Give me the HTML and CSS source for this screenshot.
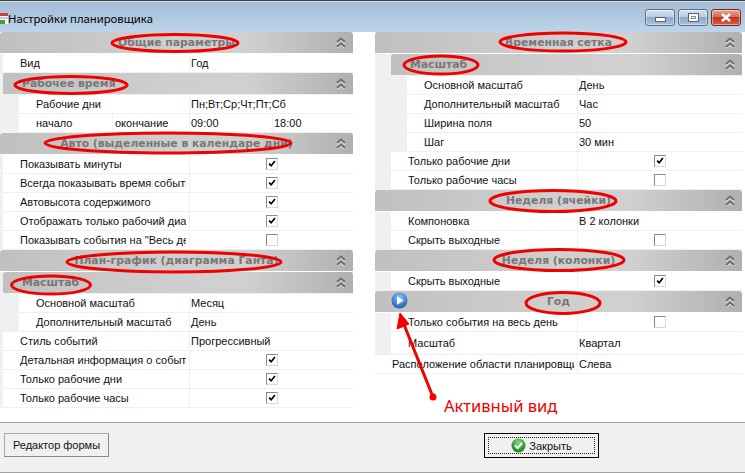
FILE: index.html
```html
<!DOCTYPE html>
<html lang="ru">
<head>
<meta charset="utf-8">
<title>Настройки планировщика</title>
<link rel="stylesheet" href="styles.css">
</head>
<body>
<svg class="defs" width="0" height="0" aria-hidden="true">
  <symbol id="chev" viewBox="0 0 10 11">
    <path d="M1 5.500 5 2l4 3.500M1 10.500 5 7l4 3.500" fill="none" stroke="#fff" stroke-width="1.600" transform="translate(0 .8)" opacity=".7"/>
    <path d="M1 5 5 1.500 9 5M1 10 5 6.500 9 10" fill="none" stroke="#6f6f6f" stroke-width="2"/>
  </symbol>
  <symbol id="tick" viewBox="0 0 12 12">
    <path d="M2.500 5.500 5 8l4.500-5.500" fill="none" stroke="#000" stroke-width="2"/>
  </symbol>
</svg>
<div class="window">
  <header class="titlebar">
    <svg class="appicon" width="8" height="11" viewBox="0 0 8 11"><rect x="0" y="0" width="8" height="11" fill="#fff"/><rect x="0" y="0" width="8" height="3" fill="#c8413a"/><rect x="0" y="7" width="5" height="4" fill="#3aa53a"/><path d="M0 5h8" stroke="#999"/></svg>
    <span class="title">Настройки планировщика</span>
    <div class="winbtns">
      <span class="winbtn"><i class="glyph-min"></i></span>
      <span class="winbtn"><i class="glyph-max"></i></span>
      <span class="winbtn close">
        <svg width="12" height="9" viewBox="0 0 12 9"><path d="M2 1l8 7M10 1 2 8" stroke="#fff" stroke-width="2.600"/></svg>
      </span>
    </div>
  </header>

  <main class="content">
    <section class="panel left">
      <div class="group">
        <div class="head">Общие параметры<svg class="chev"><use href="#chev"/></svg></div>
        <div class="body thin">
          <div class="row"><span class="label">Вид</span><span class="value">Год</span></div>
          <div class="group">
            <div class="head sub">Рабочее время<svg class="chev"><use href="#chev"/></svg></div>
            <div class="body">
              <div class="row"><span class="label">Рабочие дни</span><span class="value">Пн;Вт;Ср;Чт;Пт;Сб</span></div>
              <div class="row four"><span class="label">начало</span><span class="label plain">окончание</span><span class="value">09:00</span><span class="value">18:00</span></div>
            </div>
          </div>
        </div>
      </div>
      <div class="group">
        <div class="head">Авто (выделенные в календаре дни)<svg class="chev"><use href="#chev"/></svg></div>
        <div class="body thin">
          <div class="row"><span class="label">Показывать минуты</span><span class="value check"><span class="box"><svg><use href="#tick"/></svg></span></span></div>
          <div class="row"><span class="label">Всегда показывать время событий</span><span class="value check"><span class="box"><svg><use href="#tick"/></svg></span></span></div>
          <div class="row"><span class="label">Автовысота содержимого</span><span class="value check"><span class="box"><svg><use href="#tick"/></svg></span></span></div>
          <div class="row"><span class="label">Отображать только рабочий диапазон</span><span class="value check"><span class="box"><svg><use href="#tick"/></svg></span></span></div>
          <div class="row"><span class="label">Показывать события на "Весь день"</span><span class="value check"><span class="box"></span></span></div>
        </div>
      </div>
      <div class="group">
        <div class="head">План-график (диаграмма Ганта)<svg class="chev"><use href="#chev"/></svg></div>
        <div class="body thin">
          <div class="group">
            <div class="head sub">Масштаб<svg class="chev"><use href="#chev"/></svg></div>
            <div class="body">
              <div class="row"><span class="label">Основной масштаб</span><span class="value">Месяц</span></div>
              <div class="row"><span class="label">Дополнительный масштаб</span><span class="value">День</span></div>
            </div>
          </div>
          <div class="row"><span class="label">Стиль событий</span><span class="value">Прогрессивный</span></div>
          <div class="row"><span class="label">Детальная информация о событии</span><span class="value check"><span class="box"><svg><use href="#tick"/></svg></span></span></div>
          <div class="row"><span class="label">Только рабочие дни</span><span class="value check"><span class="box"><svg><use href="#tick"/></svg></span></span></div>
          <div class="row"><span class="label">Только рабочие часы</span><span class="value check"><span class="box"><svg><use href="#tick"/></svg></span></span></div>
        </div>
      </div>
    </section>

    <section class="panel right">
      <div class="group">
        <div class="head">Временная сетка<svg class="chev"><use href="#chev"/></svg></div>
        <div class="body">
          <div class="group">
            <div class="head sub">Масштаб<svg class="chev"><use href="#chev"/></svg></div>
            <div class="body">
              <div class="row"><span class="label">Основной масштаб</span><span class="value">День</span></div>
              <div class="row"><span class="label">Дополнительный масштаб</span><span class="value">Час</span></div>
              <div class="row"><span class="label">Ширина поля</span><span class="value">50</span></div>
              <div class="row"><span class="label">Шаг</span><span class="value">30 мин</span></div>
            </div>
          </div>
          <div class="row"><span class="label">Только рабочие дни</span><span class="value check"><span class="box"><svg><use href="#tick"/></svg></span></span></div>
          <div class="row"><span class="label">Только рабочие часы</span><span class="value check"><span class="box"></span></span></div>
        </div>
      </div>
      <div class="group">
        <div class="head">Неделя (ячейки)<svg class="chev"><use href="#chev"/></svg></div>
        <div class="body">
          <div class="row"><span class="label">Компоновка</span><span class="value">В 2 колонки</span></div>
          <div class="row"><span class="label">Скрыть выходные</span><span class="value check"><span class="box"></span></span></div>
        </div>
      </div>
      <div class="group">
        <div class="head">Неделя (колонки)<svg class="chev"><use href="#chev"/></svg></div>
        <div class="body">
          <div class="row"><span class="label">Скрыть выходные</span><span class="value check"><span class="box"><svg><use href="#tick"/></svg></span></span></div>
        </div>
      </div>
      <div class="group">
        <div class="head">
          <svg class="play" width="17" height="17" viewBox="0 0 17 17">
            <defs><radialGradient id="pg" cx=".5" cy=".3" r=".8"><stop offset="0" stop-color="#8fc1f0"/><stop offset=".6" stop-color="#3a7fd0"/><stop offset="1" stop-color="#1d4f9a"/></radialGradient></defs>
            <circle cx="8.500" cy="8.500" r="8" fill="url(#pg)"/>
            <path d="M6 4.200v8.600l6.600-4.300z" fill="#fff"/>
          </svg>
          Год<svg class="chev"><use href="#chev"/></svg>
        </div>
        <div class="body">
          <div class="row"><span class="label">Только события на весь день</span><span class="value check"><span class="box"></span></span></div>
          <div class="row tall"><span class="label">Масштаб</span><span class="value">Квартал</span></div>
        </div>
      </div>
      <div class="row"><span class="label">Расположение области планировщика</span><span class="value">Слева</span></div>
    </section>
  </main>

  <footer class="footer">
    <div class="footer-left"><button class="btn" type="button">Редактор формы</button></div>
    <div class="footer-right">
      <button class="btn primary" type="button">
        <span class="focus">
          <svg width="15" height="15" viewBox="0 0 15 15">
            <defs><radialGradient id="gg" cx=".5" cy=".3" r=".8"><stop offset="0" stop-color="#8fdc7a"/><stop offset=".6" stop-color="#2f9a35"/><stop offset="1" stop-color="#14641e"/></radialGradient></defs>
            <circle cx="7.500" cy="7.500" r="7" fill="url(#gg)"/>
            <path d="M4 7.500 6.600 10 11 5" fill="none" stroke="#fff" stroke-width="2"/>
          </svg>
          Закрыть
        </span>
      </button>
    </div>
  </footer>

  <svg class="annot" width="745" height="473" viewBox="0 0 745 473" aria-hidden="true">
    <g fill="none" stroke="#f00000" stroke-width="3">
      <ellipse cx="175" cy="43" rx="63" ry="8.500"/>
      <ellipse cx="71" cy="85" rx="56" ry="8.500"/>
      <ellipse cx="168" cy="143" rx="123" ry="10"/>
      <ellipse cx="174" cy="262" rx="107" ry="10"/>
      <ellipse cx="51" cy="285" rx="39.500" ry="9"/>
      <ellipse cx="563" cy="42" rx="63" ry="9"/>
      <ellipse cx="441" cy="65" rx="37" ry="9"/>
      <ellipse cx="553" cy="201" rx="63" ry="10.500"/>
      <ellipse cx="559" cy="260" rx="65" ry="10.500"/>
      <ellipse cx="563" cy="303" rx="37" ry="10.500"/>
    </g>
    <path d="M433 397 403 322" stroke="#f00000" stroke-width="3" fill="none"/>
    <path d="M400 313 397 329 409 324z" fill="#f00000" stroke="#f00000"/>
    <circle cx="433" cy="397" r="3.500" fill="#f00000"/>
  </svg>
  <span class="note">Активный вид</span>
</div>
</body>
</html>
```

FILE: styles.css
```css
* { box-sizing: border-box; }
html, body { margin: 0; padding: 0; }
body {
  width: 745px;
  height: 473px;
  overflow: hidden;
  background: #fff;
  font-family: "Liberation Sans", "Noto Sans", sans-serif;
  font-size: 11px;
  color: #111;
}
.defs { position: absolute; }
.window {
  position: relative;
  width: 745px;
  height: 473px;
  display: flex;
  flex-direction: column;
}
.titlebar {
  height: 32px;
  flex: none;
  display: flex;
  align-items: center;
  border-top: 1px solid #3a3f45;
  background: linear-gradient(#a3bad3, #bdd5ea);
  box-shadow: inset 0 1px 0 #d4e0ec;
}
.appicon { flex: none; margin-top: 4px; }
.title {
  padding-top: 4px;
  font-family: "Noto Sans", sans-serif;
  font-size: 11.300px;
  color: #000;
}
.winbtns {
  margin-left: auto;
  margin-right: 4px;
  display: flex;
  gap: 3px;
  margin-top: 2px;
}
.winbtn {
  width: 30px;
  height: 17px;
  display: flex;
  align-items: center;
  justify-content: center;
  border: 1px solid #5d6f85;
  border-radius: 3px;
  background: linear-gradient(#d5e2f0 0, #b7cde3 45%, #8fa9c6 50%, #a7c2dc 100%);
  box-shadow: inset 0 0 0 1px rgba(255,255,255,.45);
}
.winbtn.close {
  border-color: #6d2a22;
  background: linear-gradient(#e8a594 0, #d96a54 45%, #c2341f 50%, #d0604a 100%);
}
.glyph-min {
  display: block;
  width: 11px;
  height: 5px;
  margin-top: 4px;
  background: #fff;
  border: 1px solid #53657a;
}
.glyph-max {
  display: block;
  width: 11px;
  height: 9px;
  background: #fff;
  border: 1px solid #53657a;
  box-shadow: inset 0 0 0 2px #fff, inset 0 0 0 3px #7b8ca0;
}
.content {
  flex: none;
  height: 385px;
  display: flex;
  gap: 22px;
  padding-right: 3px;
  background: #fff;
}
.panel { flex: none; }
.left { width: 353px; }
.right { width: 367px; }
.head {
  position: relative;
  height: 21px;
  margin-bottom: 1px;
  display: flex;
  align-items: center;
  justify-content: center;
  border-radius: 3px 3px 0 0;
  background: linear-gradient(90deg, #c0c0c0 0, #cfcfcf 50%, #d0d0d0 70%, #b0b0b0 100%);
  font-family: "DejaVu Sans", sans-serif;
  font-weight: 700;
  font-size: 10.800px;
  color: #777;
}
.head.sub {
  justify-content: flex-start;
  padding-left: 19px;
}
.chev {
  position: absolute;
  right: 7px;
  top: 5px;
  width: 10px;
  height: 11px;
}
.play {
  position: absolute;
  left: 16px;
  top: 1px;
}
.body {
  padding-left: 16px;
  background: #f0f0f0;
}
.body.thin { padding-left: 3px; }
.row {
  display: grid;
  grid-template-columns: 1fr 165px;
  height: 19px;
  background: #fff;
  border-bottom: 1px solid #f0f0f0;
}
.left .row { grid-template-columns: 1fr 164px; }
.left .row.four { grid-template-columns: 93px 77px 83px 81px; }
.row.tall { height: 23px; }
.label, .value {
  display: flex;
  align-items: center;
  min-width: 0;
  overflow: hidden;
  white-space: nowrap;
  font-size: 11px;
}
.label { padding-left: 17px; border-right: 3px solid #fff; }
.label.plain { padding-left: 2px; border-left: 1px solid #f0f0f0; border-right: 0; }
.value { padding-left: 1px; border-left: 1px solid #f0f0f0; }
.value.check { justify-content: center; padding-left: 0; }
.box {
  display: block;
  width: 12px;
  height: 12px;
  margin-bottom: 1px;
  background: #fff;
  border: 1px solid #d8d8d8;
  border-top-color: #8a8a8a;
  border-left-color: #8a8a8a;
}
.box svg { display: block; width: 10px; height: 10px; }
.footer {
  flex: none;
  height: 51px;
  margin-top: 5px;
  display: flex;
  background: #f0f0f0;
  border-top: 1px solid #a0a0a0;
  border-bottom: 1px solid #a0a0a0;
  padding-top: 10px;
}
.footer-left { padding-left: 4px; width: 484px; flex: none; }
.btn {
  height: 24px;
  width: 105px;
  padding: 0;
  background: #f0f0f0;
  border: 1px solid #a8a8a8;
  border-right-color: #8a8a8a;
  border-bottom-color: #8a8a8a;
  font: 11px "Liberation Sans", "Noto Sans", sans-serif;
  color: #111;
}
.btn.primary {
  width: 115px;
  height: 25px;
  border: 1px solid #000;
  padding: 3px;
}
.focus {
  height: 100%;
  display: flex;
  align-items: center;
  justify-content: center;
  gap: 3px;
  border: 1px dotted #222;
}
.annot {
  position: absolute;
  left: 0;
  top: 0;
  pointer-events: none;
}
.note {
  position: absolute;
  left: 444px;
  top: 395px;
  font-family: "Noto Sans", sans-serif;
  font-size: 16.500px;
  line-height: 22px;
  color: #f00000;
}
```
